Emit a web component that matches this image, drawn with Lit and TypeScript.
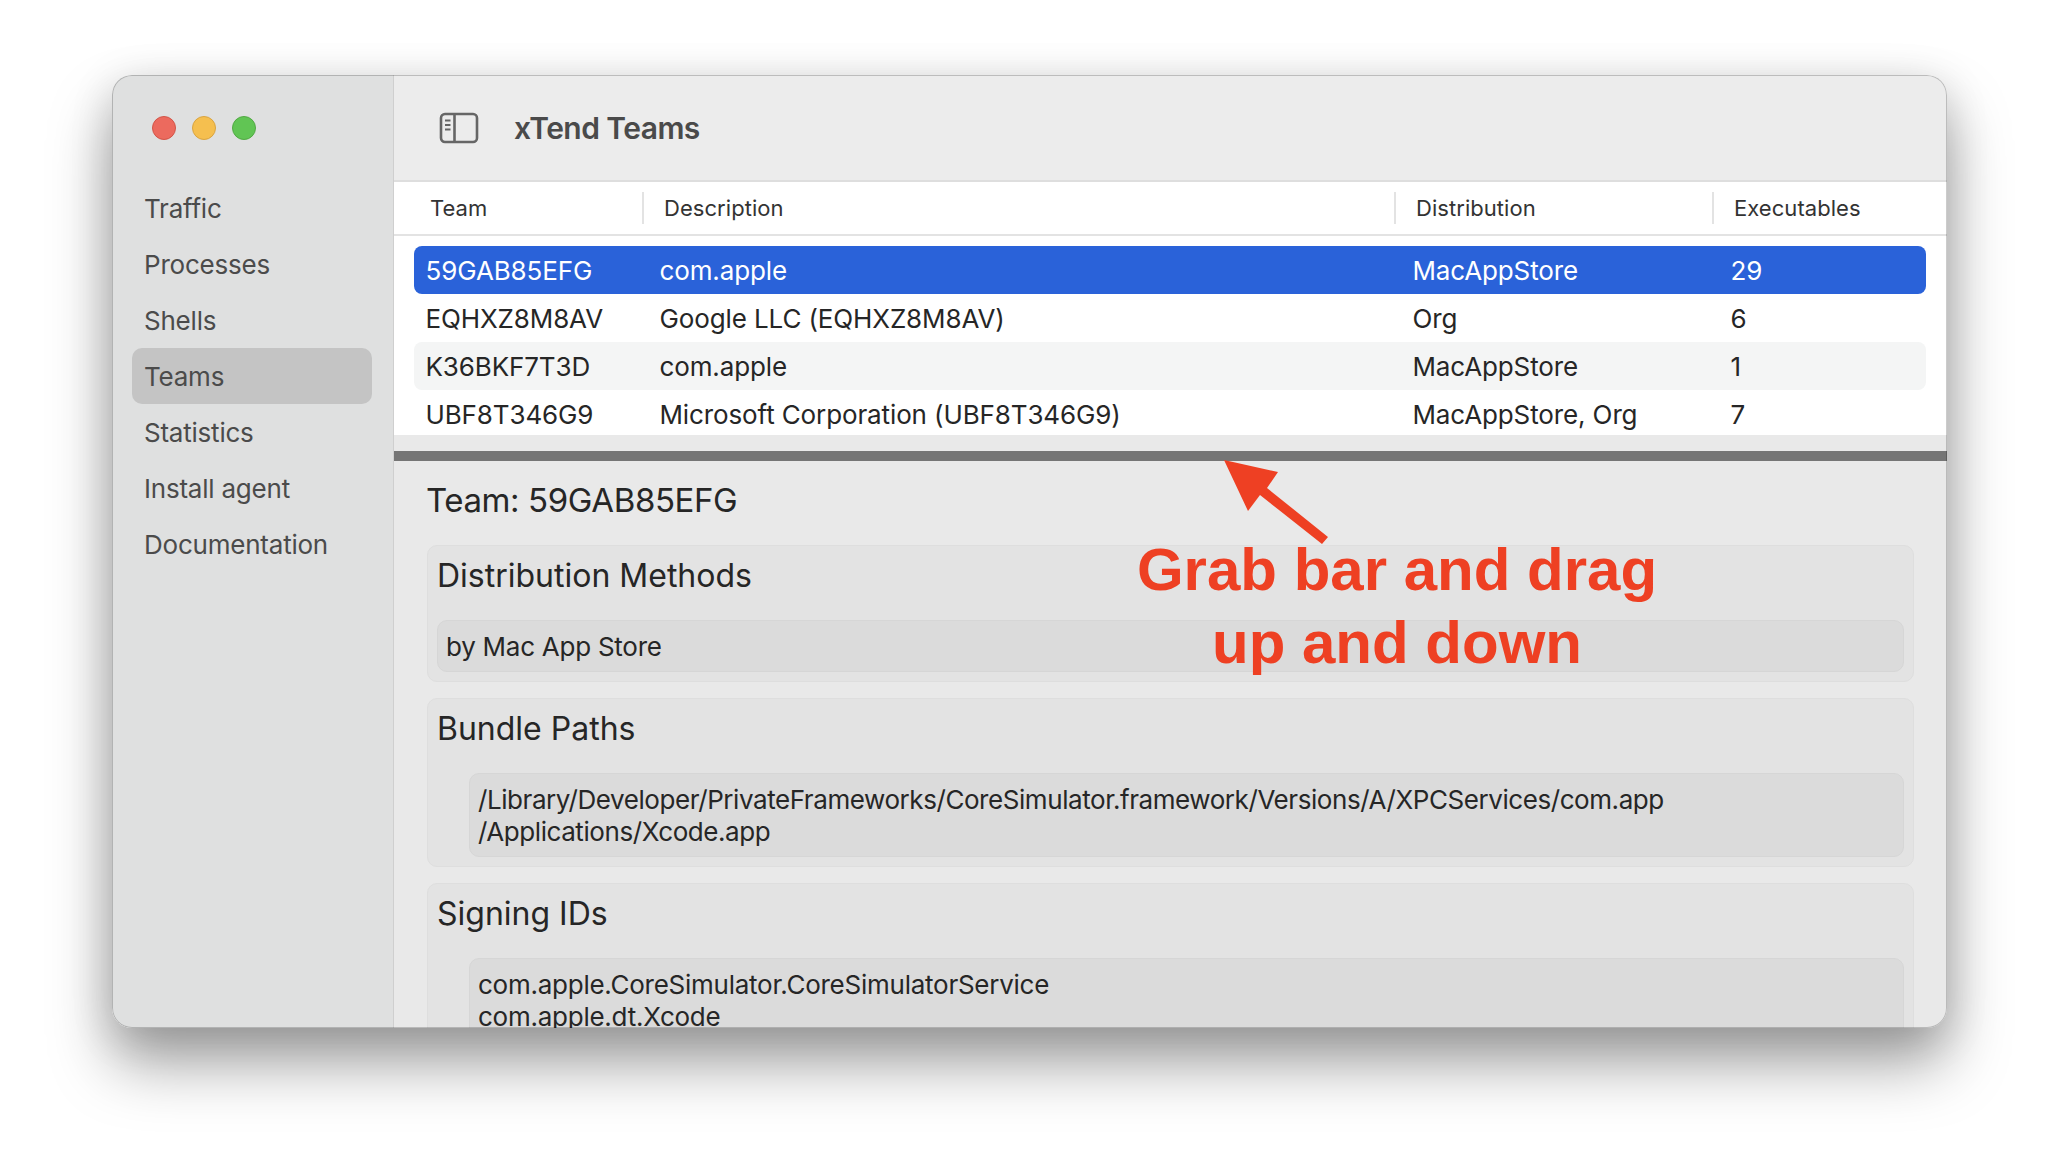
import { LitElement, html, css } from "lit";
import { customElement } from "lit/decorators.js";

const NAV = ["Traffic", "Processes", "Shells", "Teams", "Statistics", "Install agent", "Documentation"];
const ROWS = [
  ["59GAB85EFG", "com.apple", "MacAppStore", "29"],
  ["EQHXZ8M8AV", "Google LLC (EQHXZ8M8AV)", "Org", "6"],
  ["K36BKF7T3D", "com.apple", "MacAppStore", "1"],
  ["UBF8T346G9", "Microsoft Corporation (UBF8T346G9)", "MacAppStore, Org", "7"],
];
const COLS = ["Team", "Description", "Distribution", "Executables"];
const GROUPS = [
  { title: "Distribution Methods", lines: ["by Mac App Store"], kind: "" },
  {
    title: "Bundle Paths",
    lines: [
      "/Library/Developer/PrivateFrameworks/CoreSimulator.framework/Versions/A/XPCServices/com.app",
      "/Applications/Xcode.app",
    ],
    kind: "indent tight",
  },
  {
    title: "Signing IDs",
    lines: ["com.apple.CoreSimulator.CoreSimulatorService", "com.apple.dt.Xcode"],
    kind: "indent",
  },
];

@customElement("app-root")
export class AppRoot extends LitElement {
  static styles = css`
    :host {
      display: block;
      position: relative;
      height: 1176px;
      overflow: hidden;
      background: #fff;
      font-family: Inter, "Liberation Sans", sans-serif;
      color: #262626;
    }
    .stage { padding: 75px 111px 0 112px; }
    .window {
      position: relative;
      display: flex;
      height: 953px;
      border-radius: 20px;
      overflow: hidden;
      background: #e9e9e9;
      box-shadow: 0 36px 62px rgba(0, 0, 0, 0.36), 0 8px 44px rgba(0, 0, 0, 0.14);
    }
    .window::after {
      content: "";
      position: absolute;
      inset: 0;
      border-radius: 20px;
      box-shadow: inset 0 0 0 1px rgba(0, 0, 0, 0.2);
      pointer-events: none;
    }
    .sidebar {
      flex: 0 0 282px;
      box-sizing: border-box;
      background: #dfe0e0;
      border-right: 1px solid #cfcfcf;
      padding: 0 21px 0 20px;
    }
    .lights { display: flex; gap: 16px; height: 105px; padding: 41px 0 0 20px; box-sizing: border-box; }
    .light { width: 24px; height: 24px; border-radius: 50%; box-sizing: border-box; border: 1px solid; }
    .red { background: #ec6a5e; border-color: #d25548; }
    .yellow { background: #f5bf4f; border-color: #d9a441; }
    .green { background: #61c554; border-color: #52a944; }
    .nav { display: flex; flex-direction: column; }
    .nav-item {
      height: 56px;
      line-height: 58px;
      padding-left: 12px;
      font-size: 26px;
      letter-spacing: -0.22px;
      color: #4b4b4b;
      border-radius: 10px;
    }
    .nav-item.on { background: #c4c4c4; }
    .main { flex: 1; min-width: 0; display: flex; flex-direction: column; }
    .header {
      flex: 0 0 auto;
      height: 105px;
      display: flex;
      align-items: center;
      gap: 35px;
      padding: 0 0 0 45px;
      background: #ececec;
      border-bottom: 2px solid #dedede;
    }
    .header svg { display: block; }
    .title { font-size: 30px; font-weight: 600; color: #4a4a4a; letter-spacing: -0.55px; }
    .table { flex: 0 0 253px; background: #fff; overflow: hidden; }
    .thead {
      display: grid;
      grid-template-columns: 248px 752px 318px 1fr;
      align-items: center;
      height: 52px;
      border-bottom: 2px solid #e3e3e3;
    }
    .th {
      height: 32px;
      line-height: 32px;
      padding-left: 20px;
      font-size: 22px;
      letter-spacing: 0.05px;
      color: #333;
      border-left: 2px solid #e3e3e3;
    }
    .th:first-child { border-left: 0; padding-left: 36px; }
    .tbody { padding: 10px 21px 0 20px; }
    .row {
      display: grid;
      grid-template-columns: 234px 753px 318px 1fr;
      height: 48px;
      line-height: 50px;
      padding-left: 11.5px;
      border-radius: 8px;
      font-size: 26px;
      letter-spacing: -0.12px;
      color: #262626;
    }
    .row.sel { background: #2a62d9; color: #fff; }
    .row.alt { background: #f4f5f5; }
    .gap { flex: 0 0 16px; background: #e9e9e9; }
    .bar { flex: 0 0 10px; background: #757575; }
    .detail { flex: 1; min-height: 0; overflow: hidden; padding: 19px 33px 0 33px; }
    .heading { font-size: 33px; line-height: 40px; letter-spacing: -0.4px; margin: 0 0 25px -1px; color: #262626; }
    .group {
      border: 1px solid #dedede;
      border-radius: 10px;
      background: #e3e3e3;
      padding: 9px;
      margin-bottom: 16px;
    }
    .group h2 {
      margin: 0 0 25px 0;
      font-size: 32px;
      line-height: 42px;
      height: 40px;
      font-weight: 400;
      letter-spacing: 0;
      color: #262626;
    }
    .box {
      background: #dbdbdb;
      border-radius: 10px;
      padding: 10px 9px 8px 8px;
      border: 1px solid #d6d6d6;
      font-size: 26px;
      line-height: 32px;
      letter-spacing: -0.25px;
      color: #262626;
    }
    .box.indent { margin-left: 32px; }
    .box.tight { letter-spacing: -0.43px; }
    .line { white-space: nowrap; }
    .note { position: absolute; left: 0; top: 0; pointer-events: none; }
    .callout {
      position: absolute;
      left: 1097px;
      top: 533px;
      width: 600px;
      text-align: center;
      font-family: "Liberation Sans", Arial, sans-serif;
      font-weight: 700;
      font-size: 60px;
      line-height: 73px;
      color: #ee4023;
    }
  `;

  render() {
    return html`
      <div class="stage">
        <div class="window">
          <aside class="sidebar">
            <div class="lights">
              <span class="light red"></span><span class="light yellow"></span><span class="light green"></span>
            </div>
            <nav class="nav">
              ${NAV.map((n) => html`<div class="nav-item ${n === "Teams" ? "on" : ""}">${n}</div>`)}
            </nav>
          </aside>
          <main class="main">
            <header class="header">
              <svg width="40" height="32" viewBox="0 0 40 32" fill="none" stroke="#666" stroke-width="2.6">
                <rect x="2" y="2" width="36" height="28" rx="4" />
                <path d="M15.5 2V30" />
                <path d="M6 8.5h5.5M6 13h5.5M6 17.5h5.5" stroke-width="2" />
              </svg>
              <div class="title">xTend Teams</div>
            </header>
            <section class="table">
              <div class="thead">${COLS.map((c) => html`<div class="th">${c}</div>`)}</div>
              <div class="tbody">
                ${ROWS.map(
                  (r, i) => html`<div class="row ${i === 0 ? "sel" : i === 2 ? "alt" : ""}">
                    ${r.map((c) => html`<div>${c}</div>`)}
                  </div>`
                )}
              </div>
            </section>
            <div class="gap"></div>
            <div class="bar"></div>
            <section class="detail">
              <div class="heading">Team: 59GAB85EFG</div>
              ${GROUPS.map(
                (g) => html`<div class="group">
                  <h2>${g.title}</h2>
                  <div class="box ${g.kind}">
                    ${g.lines.map((l) => html`<div class="line">${l}</div>`)}
                  </div>
                </div>`
              )}
            </section>
          </main>
        </div>
      </div>
      <svg class="note" width="2058" height="1176" viewBox="0 0 2058 1176">
        <path d="M1224 460L1278 472L1267 488L1328 537L1322 544L1260 495L1248 511Z" fill="#ee4023" />
      </svg>
      <div class="callout">Grab bar and drag<br />up and down</div>
    `;
  }
}
